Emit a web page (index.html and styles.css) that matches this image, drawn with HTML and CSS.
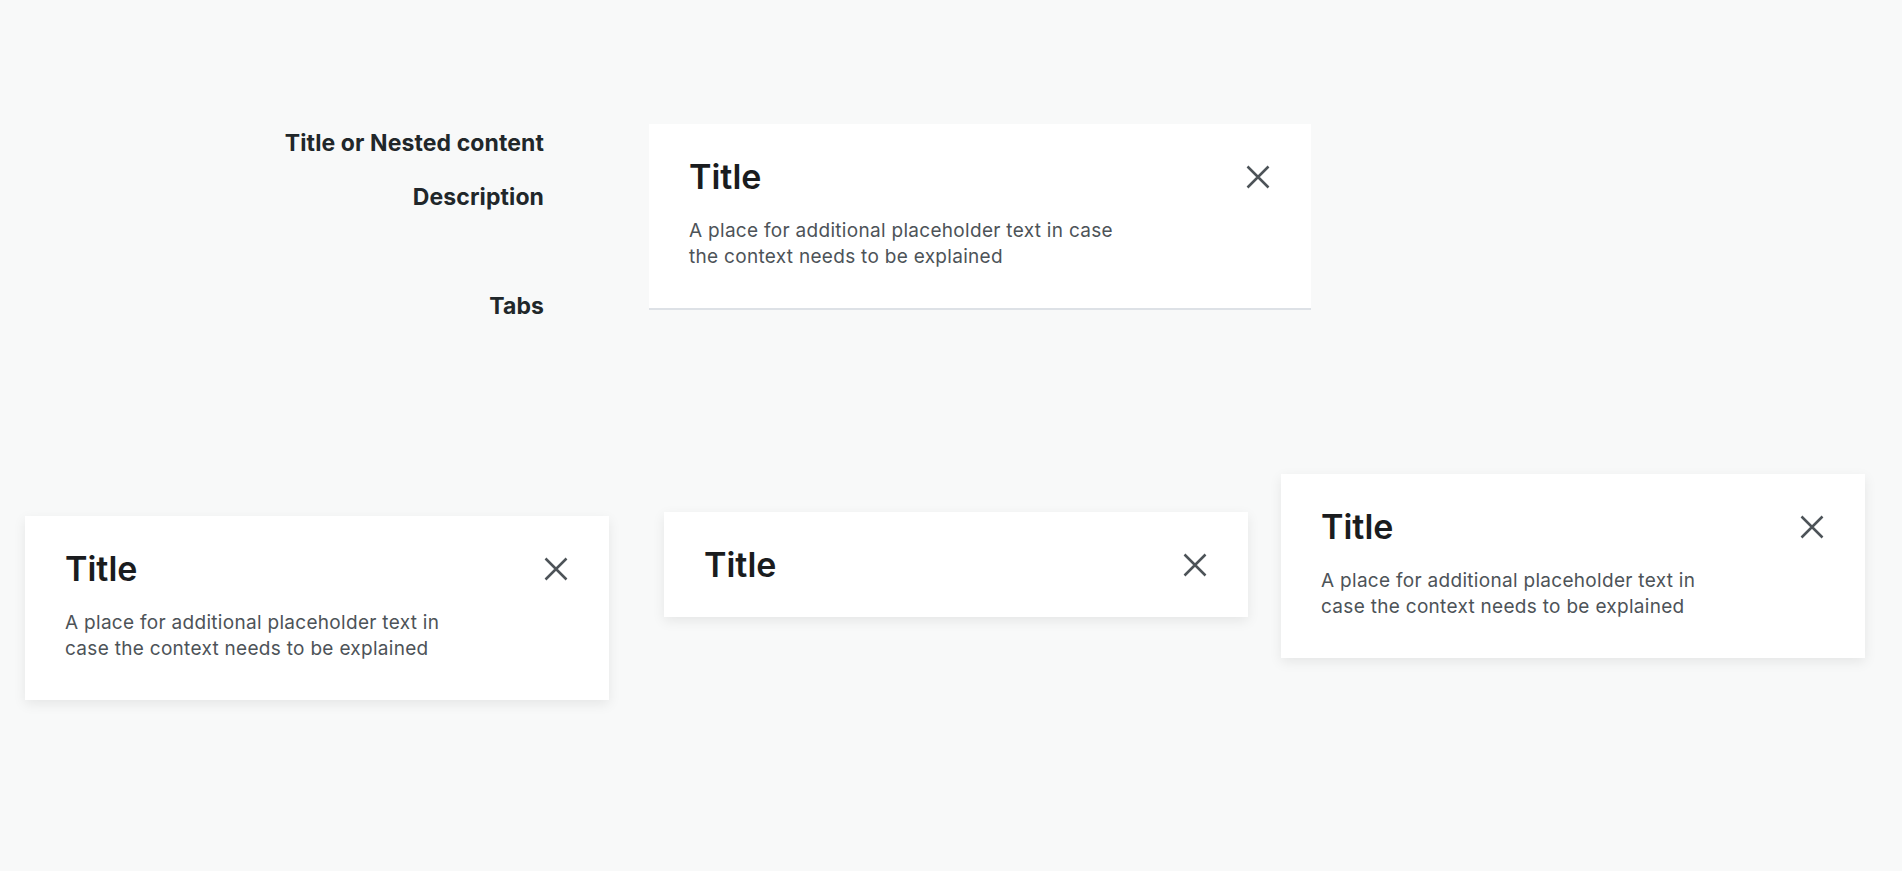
FILE: index.html
```html
<!DOCTYPE html>
<html lang="en">
<head>
<meta charset="utf-8">
<title>Modal header anatomy</title>
<link rel="stylesheet" href="styles.css">
</head>
<body>
<main class="page">
  <section class="anatomy">
    <div class="labels">
      <span class="label label--title">Title or Nested content</span>
      <span class="label label--desc">Description</span>
      <span class="label label--tabs">Tabs</span>
    </div>
    <div class="card card--flat card--wide">
      <div class="card-head">
        <h2 class="card-title">Title</h2>
        <svg class="close" width="24" height="24" viewBox="0 0 24 24" aria-hidden="true"><path d="M1.5 1.5 L22.5 22.5 M22.5 1.5 L1.5 22.5"/></svg>
      </div>
      <p class="card-desc">A place for additional placeholder text in case the context needs to be explained</p>
    </div>
  </section>
  <section class="variants">
    <div class="card card--raised card--v1">
      <div class="card-head">
        <h2 class="card-title">Title</h2>
        <svg class="close" width="24" height="24" viewBox="0 0 24 24" aria-hidden="true"><path d="M1.5 1.5 L22.5 22.5 M22.5 1.5 L1.5 22.5"/></svg>
      </div>
      <p class="card-desc">A place for additional placeholder text in case the context needs to be explained</p>
    </div>
    <div class="card card--raised card--v2">
      <div class="card-head">
        <h2 class="card-title">Title</h2>
        <svg class="close" width="24" height="24" viewBox="0 0 24 24" aria-hidden="true"><path d="M1.5 1.5 L22.5 22.5 M22.5 1.5 L1.5 22.5"/></svg>
      </div>
    </div>
    <div class="card card--raised card--v3">
      <div class="card-head">
        <h2 class="card-title">Title</h2>
        <svg class="close" width="24" height="24" viewBox="0 0 24 24" aria-hidden="true"><path d="M1.5 1.5 L22.5 22.5 M22.5 1.5 L1.5 22.5"/></svg>
      </div>
      <p class="card-desc">A place for additional placeholder text in case the context needs to be explained</p>
    </div>
  </section>
</main>
</body>
</html>
```
FILE: styles.css
```css
* { box-sizing: border-box; }
html, body { margin: 0; padding: 0; }
body {
  background: #f8f9f9;
  font-family: Inter, "Noto Sans", "Liberation Sans", sans-serif;
  width: 1902px;
  height: 871px;
  overflow: hidden;
}
.page { display: flex; flex-direction: column; }

.anatomy {
  display: flex;
  align-items: flex-start;
  padding-top: 124px;
  gap: 105px;
  height: 310px;
}
.labels {
  width: 544px;
  display: flex;
  flex-direction: column;
  align-items: flex-end;
  padding-top: 5px;
}
.label {
  font-size: 23px;
  line-height: 28px;
  font-weight: 700;
  letter-spacing: 0.1px;
  color: #21272a;
  white-space: nowrap;
}
.label--desc { margin-top: 26px; }
.label--tabs { margin-top: 81px; }

.card {
  background: #ffffff;
  padding: 33px 40px 32px 40px;
  width: 584px;
}
.card--wide { width: 662px; }
.card--flat { border-bottom: 2px solid #dde1e6; }
.card--raised { box-shadow: 0 4px 12px rgba(0, 0, 0, 0.08); }

.card-head {
  display: flex;
  align-items: center;
  justify-content: space-between;
}
.card-title {
  margin: 0;
  font-size: 34px;
  line-height: 40px;
  font-weight: 600;
  color: #1a1c1e;
}
.close {
  display: block;
  fill: none;
  stroke: #4d5358;
  stroke-width: 2.5;
  margin-right: 1px;
}
.card-desc {
  margin: 21px 0 6px 0;
  max-width: 77%;
  font-size: 19px;
  line-height: 26px;
  letter-spacing: 0.3px;
  color: #4d5358;
}

.variants {
  display: flex;
  align-items: flex-start;
  padding-top: 164px;
  padding-left: 25px;
}
.card--v1 { margin-top: 42px; }
.card--v2 { margin-top: 38px; margin-left: 55px; }
.card--v3 { margin-left: 33px; }
```
